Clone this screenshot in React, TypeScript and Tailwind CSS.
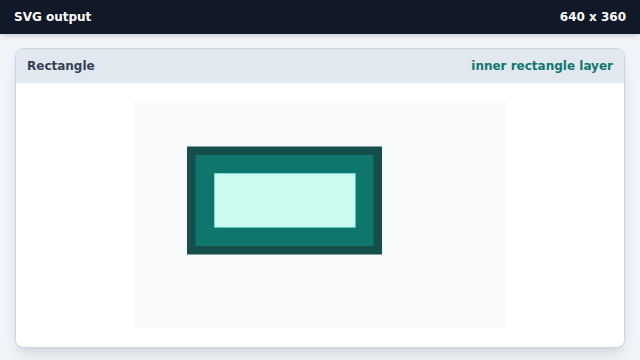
export default function App() {
  return (
    <div
      className="w-[640px] h-[360px] flex flex-col bg-[#f1f5f9] overflow-hidden"
      style={{ fontFamily: '"DejaVu Sans", "Liberation Sans", sans-serif' }}
    >
      {/* Top bar */}
      <header className="h-[34px] shrink-0 bg-[#111827] flex items-center justify-between px-[14px] text-white text-[12px] font-bold shadow-md">
        <span>SVG output</span>
        <span>640 x 360</span>
      </header>

      <main className="flex-1 px-[15px] pt-[14px] pb-[12px] flex">
        <section className="flex-1 flex flex-col rounded-lg border border-[#cbd5e1] bg-white shadow-lg overflow-hidden">
          <div className="h-[34px] shrink-0 bg-[#e2e8f0] flex items-center justify-between px-[11px] pb-px text-[12px] font-bold">
            <span className="text-[#334155]">Rectangle</span>
            <span className="text-[#0f766e]">inner rectangle layer</span>
          </div>
          <div className="flex-1 flex items-start justify-center pt-[18px]">
            <svg width="374" height="227" viewBox="0 0 374 227">
              <rect x="0" y="0" width="374" height="227" fill="#f8fafc" />
              <rect x="54" y="45.5" width="195" height="108" fill="#134e4a" />
              <rect x="62.5" y="54" width="178" height="91" fill="#0f766e" />
              <rect x="81.3" y="72.3" width="141" height="54" fill="#ccfbf1" stroke="#5eead4" strokeWidth="0.6" />
            </svg>
          </div>
        </section>
      </main>
    </div>
  );
}
